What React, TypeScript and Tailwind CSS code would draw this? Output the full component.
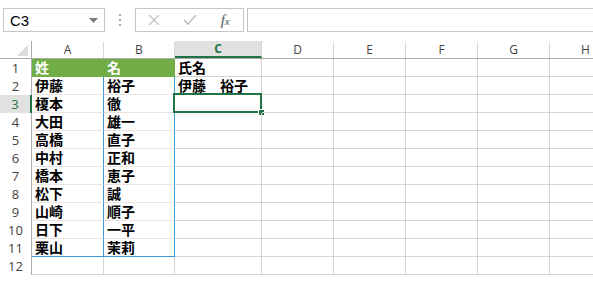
import React from "react";

const cols = [
  { l: "A", w: "w-[72px]" },
  { l: "B", w: "w-[71px]" },
  { l: "C", w: "w-[87px]" },
  { l: "D", w: "w-[72px]" },
  { l: "E", w: "w-[72px]" },
  { l: "F", w: "w-[72px]" },
  { l: "G", w: "w-[72px]" },
  { l: "H", w: "w-[72px]" },
];

const rows: string[][] = [
  ["姓", "名", "氏名"],
  ["伊藤", "裕子", "伊藤　裕子"],
  ["榎本", "徹", ""],
  ["大田", "雄一", ""],
  ["高橋", "直子", ""],
  ["中村", "正和", ""],
  ["橋本", "恵子", ""],
  ["松下", "誠", ""],
  ["山崎", "順子", ""],
  ["日下", "一平", ""],
  ["栗山", "茉莉", ""],
  ["", "", ""],
];

const jp = "font-['MS_PGothic','Noto_Sans_CJK_JP',sans-serif]";

function cellClass(r: number, c: number) {
  // r: 1-based row, c: 0-based column
  if (r === 1 && c <= 1) {
    return "bg-[#70ad47] text-white border-r border-b border-[#70ad47]";
  }
  if (c <= 1 && r >= 2 && r <= 11) {
    return r === 11
      ? "border-r border-r-[#3a9ad9] border-b border-b-[#3a9ad9]"
      : "border-r border-r-[#3a9ad9] border-b border-b-[#ece2e0]";
  }
  return "border-r border-b border-[#d4d4d4]";
}

export default function App() {
  return (
    <div className="w-[593px] h-[281px] overflow-hidden bg-white relative">
      {/* Formula bar */}
      <div className="h-[41px] flex items-start pt-[8px] pl-[3px]">
        <div className="w-[102px] h-[24px] border border-[#c6c6c6] flex items-center justify-between pl-[6px] pr-[6px]">
          <span className="text-[15px] text-black font-['Liberation_Sans',sans-serif] leading-none">C3</span>
          <svg width="9" height="5" viewBox="0 0 9 5">
            <path d="M0 0 L9 0 L4.5 5 Z" fill="#7a7a7a" />
          </svg>
        </div>
        <div className="w-[30px] h-[24px] flex flex-col items-center justify-center gap-[3px]">
          <div className="w-[2px] h-[2px] bg-[#a6a6a6]" />
          <div className="w-[2px] h-[2px] bg-[#a6a6a6]" />
          <div className="w-[2px] h-[2px] bg-[#a6a6a6]" />
        </div>
        <div className="w-[109px] h-[24px] border border-[#c6c6c6] flex items-center">
          <div className="w-[36px] flex justify-center">
            <svg width="12" height="12" viewBox="0 0 12 12">
              <path d="M1 1 L11 11 M11 1 L1 11" stroke="#c3c3c3" strokeWidth="1.4" />
            </svg>
          </div>
          <div className="w-[36px] flex justify-center">
            <svg width="14" height="12" viewBox="0 0 14 12">
              <path d="M1 6 L5 10 L13 1" stroke="#c3c3c3" strokeWidth="1.8" fill="none" />
            </svg>
          </div>
          <div className="w-[36px] flex justify-center">
            <span className="text-[15px] italic text-[#555] font-['Liberation_Serif',serif] leading-none">
              f<span className="text-[11px]">x</span>
            </span>
          </div>
        </div>
        <div className="ml-[3px] flex-1 h-[24px] border-y border-l border-[#c6c6c6]" />
      </div>

      {/* Column header */}
      <div className="flex h-[18px] border-b border-[#ababab]">
        <div className="w-[32px] border-r border-[#ababab] relative shrink-0">
          <svg className="absolute right-[3px] bottom-[2px]" width="11" height="11" viewBox="0 0 11 11">
            <path d="M11 0 L11 11 L0 11 Z" fill="#dcdcdc" />
          </svg>
        </div>
        {cols.map((c) =>
          c.l === "C" ? (
            <div
              key={c.l}
              className={`${c.w} shrink-0 bg-[#e1e1e1] border-r border-[#d4d4d4] border-b-2 border-b-[#217346] text-center text-[12px] leading-[16px] font-bold text-[#217346] font-['Open_Sans',sans-serif]`}
            >
              {c.l}
            </div>
          ) : (
            <div
              key={c.l}
              className={`${c.w} shrink-0 border-r border-[#dadada] mt-[1px] text-center text-[12px] leading-[16px] text-[#444] font-['Open_Sans',sans-serif]`}
            >
              {c.l}
            </div>
          )
        )}
      </div>

      {/* Rows */}
      {rows.map((row, i) => {
        const r = i + 1;
        return (
          <div key={r} className="flex h-[18px]">
            {r === 3 ? (
              <div className="w-[32px] shrink-0 bg-[#e1e1e1] border-r-2 border-[#217346] text-center text-[13px] leading-[18px] text-[#217346] font-['Open_Sans',sans-serif]">
                {r}
              </div>
            ) : (
              <div className="w-[32px] shrink-0 border-r border-[#ababab] text-center text-[13px] leading-[18px] text-[#444] font-['Open_Sans',sans-serif]">
                {r}
              </div>
            )}
            {cols.map((c, ci) => {
              const text = ci <= 2 ? row[ci] : "";
              const selected = r === 3 && ci === 2;
              return (
                <div
                  key={c.l}
                  className={`${c.w} shrink-0 relative ${cellClass(r, ci)} ${jp} text-[14px] font-semibold leading-[17px] pl-[3px] whitespace-nowrap`}
                >
                  {text}
                  {selected && (
                    <>
                      <div className="absolute left-[-2px] top-[-2px] right-[-1px] bottom-[-1px] border-2 border-[#217346]" />
                      <div className="absolute right-[-4px] bottom-[-4px] w-[7px] h-[7px] bg-[#217346] border border-white" />
                    </>
                  )}
                </div>
              );
            })}
          </div>
        );
      })}
    </div>
  );
}
